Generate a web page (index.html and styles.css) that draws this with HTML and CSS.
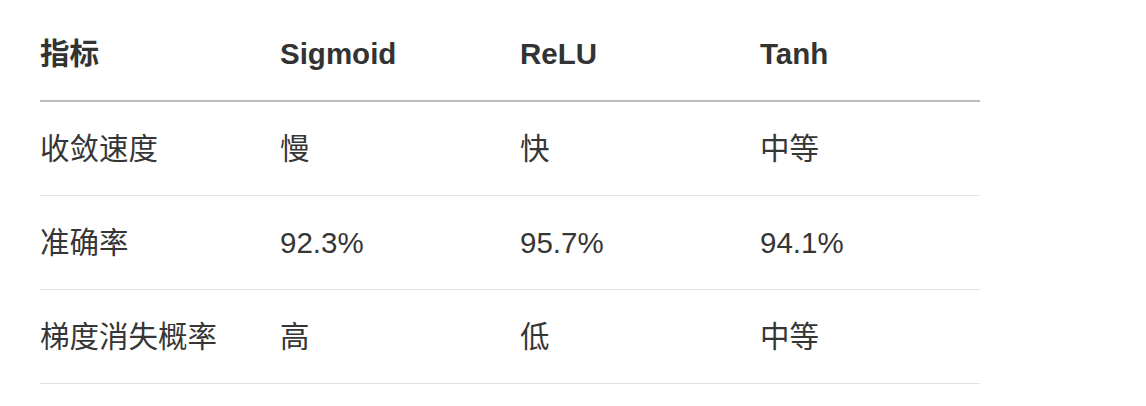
FILE: index.html
```html
<!DOCTYPE html>
<html lang="zh">
<head>
<meta charset="utf-8">
<link rel="stylesheet" href="styles.css">
</head>
<body>
<table class="metrics">
  <colgroup>
    <col class="c1"><col class="c2"><col class="c3"><col class="c4">
  </colgroup>
  <thead>
    <tr><th>指标</th><th>Sigmoid</th><th>ReLU</th><th>Tanh</th></tr>
  </thead>
  <tbody>
    <tr><td>收敛速度</td><td>慢</td><td>快</td><td>中等</td></tr>
    <tr><td>准确率</td><td>92.3%</td><td>95.7%</td><td>94.1%</td></tr>
    <tr><td>梯度消失概率</td><td>高</td><td>低</td><td>中等</td></tr>
  </tbody>
</table>
</body>
</html>
```
FILE: styles.css
```css
html, body {
  margin: 0;
  background: #fff;
}
body {
  padding: 7px 40px 8px;
  font-family: "Liberation Sans", "Noto Sans CJK SC", sans-serif;
  color: #333;
}
.metrics {
  border-collapse: collapse;
  table-layout: fixed;
  width: 940px;
}
.c1, .c2, .c3 { width: 240px; }
.c4 { width: 220px; }
.metrics th, .metrics td {
  text-align: left;
  padding: 25px 0;
  font-size: 29.5px;
  line-height: 43px;
  white-space: nowrap;
}
.metrics th {
  font-weight: bold;
  color: #333;
  border-bottom: 2px solid #bcbcbc;
}
.metrics td {
  font-weight: normal;
  color: #363636;
  border-bottom: 1px solid #e3e3e3;
}
```
